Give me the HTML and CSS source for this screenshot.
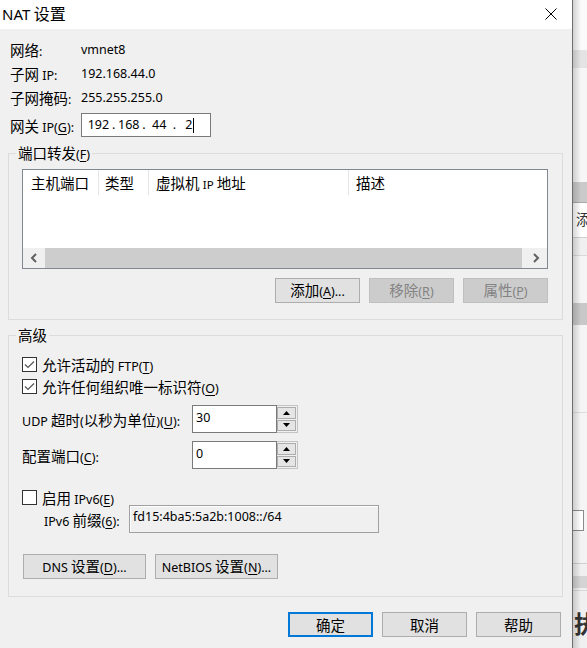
FILE: index.html
```html
<!DOCTYPE html>
<html lang="zh-CN">
<head>
    <meta charset="UTF-8">
    <meta name="viewport" content="width=device-width, initial-scale=1.0">
    <title>NAT 设置</title>
    <link rel="stylesheet" href="styles.css">
</head>
<body>
<div class="screen">
    <div class="dialog">
        <div class="titlebar">
            <span class="title"><span class="title-lat">NAT</span> 设置</span>
            <svg class="close" width="12" height="12" viewBox="0 0 12 12">
                <path d="M0.5 0.5L11.5 11.5M11.5 0.5L0.5 11.5" stroke="#000" stroke-width="1" fill="none"/>
            </svg>
        </div>

        <div class="info">
            <div class="info-row"><span class="info-label">网络<span class="l">:</span></span><span class="l">vmnet8</span></div>
            <div class="info-row"><span class="info-label">子网 <span class="l">IP:</span></span><span class="l">192.168.44.0</span></div>
            <div class="info-row"><span class="info-label">子网掩码<span class="l">:</span></span><span class="l">255.255.255.0</span></div>
            <div class="info-row gw-row">
                <span class="info-label">网关 <span class="l">IP(<u>G</u>):</span></span>
                <div class="ipbox l">
                    <span class="oct">192</span><span class="dot">.</span><span class="oct">168</span><span class="dot">.</span><span class="oct">44</span><span class="dot">.</span><span class="oct last">2<span class="caret"></span></span>
                </div>
            </div>
        </div>

        <fieldset class="group ports">
            <legend>端口转发<span class="l">(<u>F</u>)</span></legend>
            <div class="listview">
                <div class="lv-head">
                    <div class="lv-col c1">主机端口</div>
                    <div class="lv-col c2">类型</div>
                    <div class="lv-col c3">虚拟机 <span class="l">IP</span> 地址</div>
                    <div class="lv-col c4">描述</div>
                </div>
                <div class="lv-body"></div>
                <div class="hscroll">
                    <span class="sb-btn">
                        <svg width="8" height="10" viewBox="0 0 8 10"><path d="M6 1L2 5L6 9" stroke="#606060" stroke-width="2" fill="none"/></svg>
                    </span>
                    <span class="sb-thumb"></span>
                    <span class="sb-gap"></span>
                    <span class="sb-btn">
                        <svg width="8" height="10" viewBox="0 0 8 10"><path d="M2 1L6 5L2 9" stroke="#606060" stroke-width="2" fill="none"/></svg>
                    </span>
                </div>
            </div>
            <div class="btn-row">
                <button class="btn">添加<span class="l">(<u>A</u>)...</span></button>
                <button class="btn" disabled>移除<span class="l">(<u>R</u>)</span></button>
                <button class="btn" disabled>属性<span class="l">(<u>P</u>)</span></button>
            </div>
        </fieldset>

        <fieldset class="group advanced">
            <legend>高级</legend>
            <div class="check-row first">
                <span class="checkbox checked"><svg width="13" height="13" viewBox="0 0 13 13"><path d="M2 6.5L5 9.5L11 3.5" stroke="#555" stroke-width="1.2" fill="none"/></svg></span>
                <span>允许活动的 <span class="l">FTP(<u>T</u>)</span></span>
            </div>
            <div class="check-row">
                <span class="checkbox checked"><svg width="13" height="13" viewBox="0 0 13 13"><path d="M2 6.5L5 9.5L11 3.5" stroke="#555" stroke-width="1.2" fill="none"/></svg></span>
                <span>允许任何组织唯一标识符<span class="l">(<u>O</u>)</span></span>
            </div>
            <div class="spin-row">
                <span class="spin-label"><span class="l">UDP</span> 超时<span class="l">(</span>以秒为单位<span class="l">)(<u>U</u>):</span></span>
                <div class="spin">
                    <div class="spin-input l">30</div>
                    <div class="spinner">
                        <span class="spin-btn"><svg width="7" height="4" viewBox="0 0 7 4"><path d="M0 4L3.5 0L7 4Z" fill="#000"/></svg></span>
                        <span class="spin-btn"><svg width="7" height="4" viewBox="0 0 7 4"><path d="M0 0L7 0L3.5 4Z" fill="#000"/></svg></span>
                    </div>
                </div>
            </div>
            <div class="spin-row">
                <span class="spin-label">配置端口<span class="l">(<u>C</u>):</span></span>
                <div class="spin">
                    <div class="spin-input l">0</div>
                    <div class="spinner">
                        <span class="spin-btn"><svg width="7" height="4" viewBox="0 0 7 4"><path d="M0 4L3.5 0L7 4Z" fill="#000"/></svg></span>
                        <span class="spin-btn"><svg width="7" height="4" viewBox="0 0 7 4"><path d="M0 0L7 0L3.5 4Z" fill="#000"/></svg></span>
                    </div>
                </div>
            </div>
            <div class="check-row ipv6-row">
                <span class="checkbox"></span>
                <span>启用 <span class="l">IPv6(<u>E</u>)</span></span>
            </div>
            <div class="prefix-row">
                <span class="prefix-label"><span class="l">IPv6</span> 前缀<span class="l">(<u>6</u>):</span></span>
                <div class="prefix-input l">fd15:4ba5:5a2b:1008::/64</div>
            </div>
            <div class="dns-row">
                <button class="btn wide"><span class="l">DNS</span> 设置<span class="l">(<u>D</u>)...</span></button>
                <button class="btn wide"><span class="l">NetBIOS</span> 设置<span class="l">(<u>N</u>)...</span></button>
            </div>
        </fieldset>

        <div class="footer">
            <button class="btn default">确定</button>
            <button class="btn">取消</button>
            <button class="btn">帮助</button>
        </div>
    </div>

    <div class="backdrop">
        <div class="bk bk-1"></div>
        <div class="bk bk-2"></div>
        <div class="bk bk-3"></div>
        <div class="bk bk-4"></div>
        <div class="bk bk-5">添</div>
        <div class="bk bk-6"></div>
        <div class="bk bk-7"></div>
        <div class="bk bk-8"></div>
        <div class="bk bk-9"></div>
        <div class="bk bk-10"></div>
        <div class="bk bk-11"></div>
        <div class="bk bk-12"></div>
        <div class="bk bk-13"></div>
        <div class="bk bk-14">执</div>
    </div>
</div>
</body>
</html>
```

FILE: styles.css
```css
body {
    margin: 0;
    background-color: #f0f0f0;
    font-family: "Noto Sans CJK SC", sans-serif;
    font-size: 14.5px;
    color: #000;
    overflow: hidden;
}
.l {
    font-family: "Noto Sans", "Noto Sans CJK SC", sans-serif;
    font-size: 12.5px;
}
u {
    text-underline-offset: 2px;
}
.screen {
    display: flex;
    width: 587px;
    height: 648px;
}
.dialog {
    width: 572px;
    flex-shrink: 0;
    border-right: 1px solid #6e6e6e;
    background-color: #f0f0f0;
    display: flex;
    flex-direction: column;
}

/* title bar */
.titlebar {
    height: 29px;
    background-color: #fff;
    display: flex;
    align-items: center;
    justify-content: space-between;
    padding: 0 15px 2px 2px;
    box-sizing: border-box;
}
.title {
    font-size: 16px;
    line-height: 20px;
}
.title-lat {
    font-family: "Noto Sans", sans-serif;
    font-size: 15px;
}
.close {
    display: block;
    margin-top: 1px;
}

/* info rows */
.info {
    padding: 8px 0 0 10px;
}
.info-row {
    display: flex;
    align-items: center;
    height: 24px;
}
.info-label {
    width: 71px;
}
.gw-row {
    margin-top: 4px;
}
.ipbox {
    width: 130px;
    height: 24px;
    box-sizing: border-box;
    border: 1px solid #7a7a7a;
    background-color: #fff;
    padding-left: 4px;
    display: flex;
    align-items: center;
    line-height: 20px;
}
.oct {
    width: 26px;
    text-align: center;
}
.oct.last {
    text-align: left;
    padding-left: 8px;
    display: flex;
    align-items: center;
}
.dot {
    width: 6px;
    text-align: center;
}
.caret {
    display: inline-block;
    width: 1px;
    height: 15px;
    background-color: #000;
    margin-left: 1px;
}

/* group boxes */
.group {
    border: 1px solid #dcdcdc;
    padding: 0 14px 16px 13px;
    min-inline-size: 0;
}
.group legend {
    padding: 0 2px;
    margin-left: -6px;
    line-height: 20px;
    height: 20px;
}
.ports {
    margin: 6px 9px 0 8px;
}
.advanced {
    margin: 5px 9px 0 8px;
    padding-bottom: 17px;
}

/* list view */
.listview {
    margin-top: 6px;
    height: 100px;
    box-sizing: border-box;
    border: 1px solid #828790;
    background-color: #fff;
    display: flex;
    flex-direction: column;
}
.lv-head {
    display: flex;
    height: 25px;
    flex-shrink: 0;
}
.lv-col {
    box-sizing: border-box;
    border-right: 1px solid #e5e5e5;
    padding-left: 7px;
    line-height: 25px;
    white-space: nowrap;
}
.lv-col .l {
    font-size: 11.5px;
}
.c1 {
    width: 76px;
    padding-left: 8px;
}
.c2 {
    width: 50px;
    padding-left: 6px;
}
.c3 {
    width: 200px;
}
.c4 {
    flex: 1;
    border-right: none;
}
.lv-body {
    flex: 1;
}
.hscroll {
    height: 20px;
    flex-shrink: 0;
    display: flex;
    background-color: #f0f0f0;
}
.sb-btn {
    width: 22px;
    display: flex;
    align-items: center;
    justify-content: center;
}
.sb-thumb {
    flex: 1;
    background-color: #cdcdcd;
}
.sb-gap {
    width: 3px;
}

/* buttons */
.btn {
    height: 25px;
    width: 85px;
    box-sizing: border-box;
    border: 1px solid #adadad;
    background-color: #e1e1e1;
    font-family: "Noto Sans CJK SC", sans-serif;
    font-size: 14.5px;
    color: #000;
    padding: 0;
    line-height: 21px;
    white-space: nowrap;
}
.btn:disabled {
    background-color: #cccccc;
    border-color: #bfbfbf;
    color: #838383;
}
.btn.default {
    border: 2px solid #0078d7;
}
.btn.wide {
    width: 123px;
}
.btn-row {
    margin-top: 9px;
    display: flex;
    justify-content: flex-end;
    gap: 9px;
}

/* advanced options */
.check-row {
    display: flex;
    align-items: center;
    height: 22px;
}
.check-row.first {
    margin-top: 8px;
}
.ipv6-row {
    margin-top: 20px;
    height: 16px;
}
.checkbox {
    width: 15px;
    height: 15px;
    box-sizing: border-box;
    border: 1px solid #333;
    background-color: #fff;
    margin-right: 5px;
    display: flex;
    align-items: center;
    justify-content: center;
}
.checkbox svg {
    display: block;
}
.spin-row {
    display: flex;
    align-items: center;
    height: 28px;
    margin-top: 8px;
}
.spin-label {
    width: 170px;
    white-space: nowrap;
}
.spin {
    display: flex;
    height: 28px;
}
.spin-input {
    width: 85px;
    box-sizing: border-box;
    border: 1px solid #7a7a7a;
    background-color: #fff;
    padding: 3px 0 0 3px;
    line-height: 18px;
}
.spinner {
    width: 21px;
    box-sizing: border-box;
    border: 1px solid #c4c4c4;
    border-left: none;
    padding: 1px 1px 1px 0;
    display: flex;
    flex-direction: column;
    gap: 1px;
}
.spin-btn {
    flex: 1;
    border: 1px solid #adadad;
    background-color: #e5e5e5;
    display: flex;
    align-items: center;
    justify-content: center;
}
.spin-btn svg {
    display: block;
}
.prefix-row {
    display: flex;
    align-items: center;
    height: 28px;
}
.prefix-label {
    width: 107px;
    box-sizing: border-box;
    padding-left: 22px;
    white-space: nowrap;
}
.prefix-input {
    width: 250px;
    height: 28px;
    box-sizing: border-box;
    border: 1px solid #a0a0a0;
    box-shadow: inset 1px 1px 0 #fff;
    background-color: #f0f0f0;
    padding: 2px 0 0 3px;
    line-height: 18px;
}
.dns-row {
    margin-top: 21px;
    margin-left: 1px;
    display: flex;
    gap: 9px;
}

/* dialog footer */
.footer {
    margin-top: 15px;
    padding-right: 11px;
    display: flex;
    justify-content: flex-end;
    gap: 9px;
}

/* window behind the dialog */
.backdrop {
    flex: 1;
    position: relative;
    overflow: hidden;
    background-color: #f4f4f4;
}
.backdrop::after {
    content: "";
    position: absolute;
    top: 0;
    bottom: 0;
    left: 0;
    width: 8px;
    background: linear-gradient(to right, rgba(0, 0, 0, 0.16), rgba(0, 0, 0, 0));
}
.bk {
    box-sizing: border-box;
}
.bk-1 { height: 50px; background-color: #fafafa; }
.bk-2 { height: 18px; background-color: #e4e4e4; }
.bk-3 { height: 114px; background-color: #f6f6f6; }
.bk-4 { height: 20px; background-color: #cacaca; }
.bk-5 {
    height: 36px;
    background-color: #fff;
    border-top: 1px solid #a8a8a8;
    border-bottom: 1px solid #d0d0d0;
    padding: 6px 0 0 3px;
    font-size: 14.5px;
    line-height: 20px;
    color: #333;
    white-space: nowrap;
}
.bk-6 { height: 18px; background-color: #f0f0f0; border-bottom: 1px solid #d8d8d8; }
.bk-7 { height: 47px; background-color: #f5f5f5; }
.bk-8 { height: 22px; background-color: #c8c8c8; }
.bk-9 { height: 88px; background-color: #f5f5f5; border-bottom: 1px solid #dcdcdc; }
.bk-10 { height: 97px; background-color: #f5f5f5; }
.bk-11 { height: 21px; width: 11px; background-color: #fff; border: 1px solid #8a8a8a; border-left: none; }
.bk-12 { height: 33px; background-color: #f3f3f3; border-bottom: 1px solid #d0d0d0; }
.bk-13 { height: 27px; background: linear-gradient(#f0f0f0 0, #f0f0f0 12px, #d4d4d4 12px, #d4d4d4 24px, #f0f0f0 24px); border-bottom: 1px solid #d8d8d8; }
.bk-14 {
    height: 60px;
    background-color: #f0f0f0;
    padding: 18px 0 0 1px;
    font-size: 24px;
    font-weight: bold;
    line-height: 28px;
    color: #333;
    white-space: nowrap;
}
```
